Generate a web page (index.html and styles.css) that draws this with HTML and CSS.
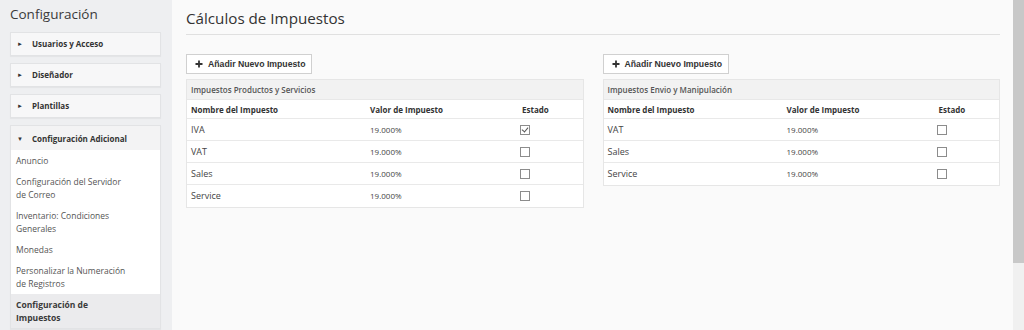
FILE: index.html
```html
<!DOCTYPE html>
<html lang="es">
<head>
    <meta charset="UTF-8">
    <title>Cálculos de Impuestos</title>
    <link rel="stylesheet" href="styles.css">
</head>
<body>
    <div class="page">
        <aside class="sidebar">
            <h1 class="side-title">Configuración</h1>

            <div class="side-panel">
                <div class="side-head"><span class="arrow">&#9658;</span>Usuarios y Acceso</div>
            </div>
            <div class="side-panel">
                <div class="side-head"><span class="arrow">&#9658;</span>Diseñador</div>
            </div>
            <div class="side-panel">
                <div class="side-head"><span class="arrow">&#9658;</span>Plantillas</div>
            </div>
            <div class="side-panel open">
                <div class="side-head"><span class="arrow">&#9660;</span>Configuración Adicional</div>
                <ul class="side-list">
                    <li>Anuncio</li>
                    <li>Configuración del Servidor<br>de Correo</li>
                    <li>Inventario: Condiciones<br>Generales</li>
                    <li>Monedas</li>
                    <li>Personalizar la Numeración<br>de Registros</li>
                    <li class="active">Configuración de<br>Impuestos</li>
                </ul>
            </div>
        </aside>

        <main class="content">
            <h2 class="page-title">Cálculos de Impuestos</h2>

            <div class="tax-grid">
                <!-- productos y servicios -->
                <section>
                    <button class="add-btn"><svg class="plus" viewBox="0 0 8 8"><path d="M4 0.5V7.5M0.5 4H7.5"/></svg>Añadir Nuevo Impuesto</button>
                    <div class="tax-panel">
                        <div class="tax-head">Impuestos Productos y Servicios</div>
                        <table class="tax-table">
                            <tr>
                                <th class="c-name">Nombre del Impuesto</th>
                                <th class="c-val">Valor de Impuesto</th>
                                <th>Estado</th>
                            </tr>
                            <tr><td class="name">IVA</td><td class="val">19.000%</td><td><span class="check on"></span></td></tr>
                            <tr><td class="name">VAT</td><td class="val">19.000%</td><td><span class="check"></span></td></tr>
                            <tr><td class="name">Sales</td><td class="val">19.000%</td><td><span class="check"></span></td></tr>
                            <tr><td class="name">Service</td><td class="val">19.000%</td><td><span class="check"></span></td></tr>
                        </table>
                    </div>
                </section>

                <!-- envio y manipulacion -->
                <section>
                    <button class="add-btn"><svg class="plus" viewBox="0 0 8 8"><path d="M4 0.5V7.5M0.5 4H7.5"/></svg>Añadir Nuevo Impuesto</button>
                    <div class="tax-panel">
                        <div class="tax-head">Impuestos Envio y Manipulación</div>
                        <table class="tax-table">
                            <tr>
                                <th class="c-name">Nombre del Impuesto</th>
                                <th class="c-val">Valor de Impuesto</th>
                                <th>Estado</th>
                            </tr>
                            <tr><td class="name">VAT</td><td class="val">19.000%</td><td><span class="check"></span></td></tr>
                            <tr><td class="name">Sales</td><td class="val">19.000%</td><td><span class="check"></span></td></tr>
                            <tr><td class="name">Service</td><td class="val">19.000%</td><td><span class="check"></span></td></tr>
                        </table>
                    </div>
                </section>
            </div>
        </main>

        <div class="scrollbar"><div class="thumb"></div></div>
    </div>
</body>
</html>
```

FILE: styles.css
```css
html, body {
    margin: 0;
    padding: 0;
    height: 100%;
}
body {
    font-family: "Open Sans", "Noto Sans", sans-serif;
    color: #333;
    background: #fafafa;
    overflow: hidden;
}
.page {
    display: flex;
    height: 330px;
}

/* sidebar */
.sidebar {
    width: 172px;
    flex-shrink: 0;
    background: #eeeff1;
    padding: 0 11px 0 10px;
    box-sizing: border-box;
}
.side-title {
    font-size: 13.5px;
    font-weight: 400;
    margin: 0;
    height: 32px;
    line-height: 29px;
    color: #3a3a3a;
}
.side-panel {
    background: #f7f7f8;
    border: 1px solid #e2e3e5;
    margin-bottom: 7px;
    box-shadow: 0 1px 1px rgba(0,0,0,0.04);
}
.side-head {
    height: 22px;
    line-height: 22px;
    font-size: 8px;
    font-weight: 700;
    color: #333;
    padding-left: 6px;
}
.side-panel.open .side-head {
    height: 24px;
    line-height: 26px;
    background: #f3f3f4;
}
.arrow {
    display: inline-block;
    width: 15px;
    font-size: 6px;
    vertical-align: 1px;
}
.side-list {
    list-style: none;
    margin: 0;
    padding: 0;
    background: #fff;
}
.side-list li {
    font-size: 8.5px;
    line-height: 13px;
    padding: 4px 6px 4px 5px;
    color: #555;
}
.side-list li.active {
    background: #ebebed;
    font-weight: 700;
    color: #3a3a3a;
}

/* content */
.content {
    flex: 1;
    padding: 0 13px 0 14px;
}
.page-title {
    font-size: 15.2px;
    font-weight: 400;
    margin: 0;
    height: 34px;
    line-height: 36px;
    color: #333;
    border-bottom: 1px solid #e0e0e0;
}
.tax-grid {
    display: grid;
    grid-template-columns: 1fr 1fr;
    gap: 19px;
    margin-top: 19px;
}
.add-btn {
    font-family: "Liberation Sans", Arial, sans-serif;
    font-size: 8.7px;
    font-weight: 700;
    color: #333;
    background: #fff;
    border: 1px solid #d0d0d0;
    height: 20px;
    width: 126px;
    padding: 0 0 0 8px;
    text-align: left;
    margin-bottom: 5px;
    display: flex;
    align-items: center;
}
.plus {
    width: 8px;
    height: 8px;
    margin-right: 5px;
    stroke: #333;
    stroke-width: 1.8;
    fill: none;
}
.tax-panel {
    background: #fff;
    border: 1px solid #e6e6e6;
    padding-bottom: 1px;
}
.tax-head {
    background: #f2f2f2;
    font-size: 8px;
    font-weight: 600;
    color: #555;
    height: 19px;
    line-height: 19px;
    padding-left: 4px;
    border-bottom: 1px solid #e8e8e8;
}
.tax-table {
    width: 100%;
    border-collapse: collapse;
}
.tax-table th {
    text-align: left;
    font-size: 8px;
    font-weight: 700;
    color: #333;
    height: 18px;
    padding: 0 4px;
}
.tax-table td {
    height: 21px;
    padding: 0 4px;
    border-top: 1px solid #e9e9e9;
}
.c-name {
    width: 171px;
}
.c-val {
    width: 144px;
}
.name {
    font-size: 9px;
    color: #444;
}
.val {
    font-size: 8px;
    color: #444;
}
.check {
    display: block;
    width: 8px;
    height: 8px;
    margin-left: -2px;
    border: 1px solid #8c8c8c;
    position: relative;
}
.check.on::after {
    content: "";
    position: absolute;
    left: 2px;
    top: 0;
    width: 3px;
    height: 5px;
    border: solid #555;
    border-width: 0 1px 1px 0;
    transform: rotate(40deg);
}

/* scrollbar */
.scrollbar {
    width: 11px;
    flex-shrink: 0;
    background: #f0f0f0;
}
.thumb {
    height: 263px;
    background: #c8c8c8;
}
```
